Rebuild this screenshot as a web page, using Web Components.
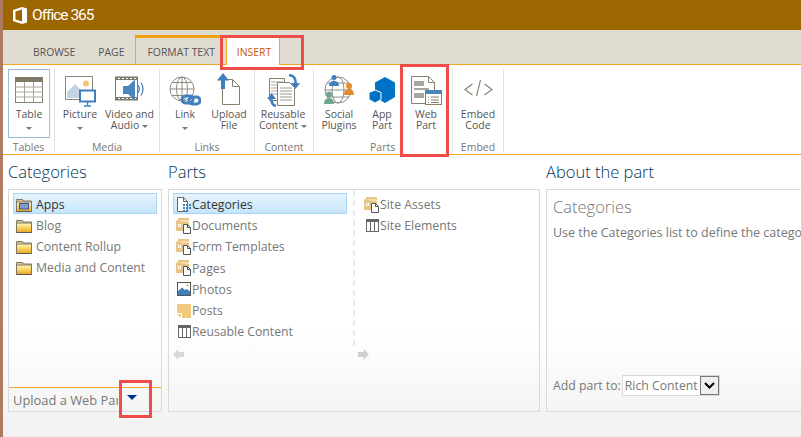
<!DOCTYPE html>
<html>
<head>
<meta charset="utf-8">
<title>Office 365</title>
<style>
  html, body { margin: 0; height: 100%; overflow: hidden; }
  body { font-family: "Open Sans", "Noto Sans", sans-serif; position: relative; background: #fff; }
</style>
</head>
<body>
<sp-page>
  <sp-suite-bar>Office 365</sp-suite-bar>
  <sp-tabs>
    <sp-tab>BROWSE</sp-tab>
    <sp-tab pad="11">PAGE</sp-tab>
    <sp-tab-group>
      <sp-tab pad="11" context>FORMAT TEXT</sp-tab>
      <sp-tab pad="10" end-pad="8" context active>INSERT</sp-tab>
    </sp-tab-group>
  </sp-tabs>
  <sp-ribbon>
    <sp-ribbon-group label="Tables" width="51">
      <sp-ribbon-button width="42" start="5" icon-top="7" pressed><sp-icon kind="table" slot="icon"></sp-icon>Table<sp-caret below></sp-caret></sp-ribbon-button>
    </sp-ribbon-group>
    <sp-ribbon-group label="Media" width="104">
      <sp-ribbon-button width="50" icon-top="7"><sp-icon kind="picture" slot="icon"></sp-icon>Picture<sp-caret below></sp-caret></sp-ribbon-button>
      <sp-ribbon-button width="49" icon-top="7"><sp-icon kind="video" slot="icon"></sp-icon>Video and<br>Audio<sp-caret></sp-caret></sp-ribbon-button>
    </sp-ribbon-group>
    <sp-ribbon-group label="Links" width="94">
      <sp-ribbon-button width="50" icon-top="7"><sp-icon kind="link" slot="icon"></sp-icon>Link<sp-caret below></sp-caret></sp-ribbon-button>
      <sp-ribbon-button width="38" icon-top="4"><sp-icon kind="upload" slot="icon"></sp-icon>Upload<br>File</sp-ribbon-button>
    </sp-ribbon-group>
    <sp-ribbon-group label="Content" width="58">
      <sp-ribbon-button width="56" icon-top="5"><sp-icon kind="reusable" slot="icon"></sp-icon>Reusable<br>Content<sp-caret></sp-caret></sp-ribbon-button>
    </sp-ribbon-group>
    <sp-ribbon-group label="Parts" width="138" label-start="56">
      <sp-ribbon-button width="50" icon-top="5"><sp-icon kind="social" slot="icon"></sp-icon>Social<br>Plugins</sp-ribbon-button>
      <sp-ribbon-button width="36" icon-top="8"><sp-icon kind="apppart" slot="icon"></sp-icon>App<br>Part</sp-ribbon-button>
      <sp-ribbon-button width="52" icon-top="7"><sp-icon kind="webpart" slot="icon"></sp-icon>Web<br>Part</sp-ribbon-button>
    </sp-ribbon-group>
    <sp-ribbon-group label="Embed" width="50">
      <sp-ribbon-button width="50" icon-top="11"><sp-icon kind="embed" slot="icon"></sp-icon>Embed<br>Code</sp-ribbon-button>
    </sp-ribbon-group>
  </sp-ribbon>
  <sp-picker>
    <sp-pane heading="Categories" width="154">
      <sp-category-list>
        <sp-item selected><sp-icon kind="folderapp" slot="icon"></sp-icon>Apps</sp-item>
        <sp-item><sp-icon kind="folder" slot="icon"></sp-icon>Blog</sp-item>
        <sp-item><sp-icon kind="folder" slot="icon"></sp-icon>Content Rollup</sp-item>
        <sp-item><sp-icon kind="folder" slot="icon"></sp-icon>Media and Content</sp-item>
      </sp-category-list>
      <sp-upload-bar>Upload a Web Part</sp-upload-bar>
    </sp-pane>
    <sp-pane heading="Parts" width="372">
      <sp-parts-columns>
        <sp-item selected tight slot="first"><sp-icon kind="catdoc" slot="icon"></sp-icon>Categories</sp-item>
        <sp-item tight slot="first"><sp-icon kind="library" slot="icon"></sp-icon>Documents</sp-item>
        <sp-item tight slot="first"><sp-icon kind="library" slot="icon"></sp-icon>Form Templates</sp-item>
        <sp-item tight slot="first"><sp-icon kind="library" slot="icon"></sp-icon>Pages</sp-item>
        <sp-item tight slot="first"><sp-icon kind="photos" slot="icon"></sp-icon>Photos</sp-item>
        <sp-item tight slot="first"><sp-icon kind="posts" slot="icon"></sp-icon>Posts</sp-item>
        <sp-item tight slot="first"><sp-icon kind="list" slot="icon"></sp-icon>Reusable Content</sp-item>
        <sp-item tight slot="second"><sp-icon kind="library" slot="icon"></sp-icon>Site Assets</sp-item>
        <sp-item tight slot="second"><sp-icon kind="list" slot="icon"></sp-icon>Site Elements</sp-item>
      </sp-parts-columns>
    </sp-pane>
    <sp-pane heading="About the part" width="300">
      <sp-about title-text="Categories">Use the Categories list to define the categories that organize your content.</sp-about>
    </sp-pane>
  </sp-picker>
</sp-page>

<!-- red marks drawn over the screenshot -->
<sp-callout style="left:220px;top:35px;width:78px;height:29px"></sp-callout>
<sp-callout style="left:400px;top:64px;width:43px;height:87px"></sp-callout>
<sp-callout style="left:119px;top:380px;width:27px;height:32px"></sp-callout>

<script>
// all icons in one place, the element below just looks them up by name
const folderGrad = `<defs><linearGradient id="fg" x1="0" y1="0" x2="0" y2="1"><stop offset="0" stop-color="#fff3b8"/><stop offset=".5" stop-color="#fbd35f"/><stop offset="1" stop-color="#e8a92c"/></linearGradient></defs>`;
const folderBody = `<path d="M.5 2.500V1.500h6l1.500 1.500h7.500v10.500H.5z" fill="#d8c48e" stroke="#7d7466"/><rect x="1" y="4.500" width="14" height="8.500" fill="url(#fg)"/><path d="M.5 4h15" stroke="#8f8672"/><path d="M.5 13.500h15" stroke="#5d5750"/>`;
const pageSmall = `<path d="M7.500 6.500h4l3 3v6h-7z" fill="#fff" stroke="#555"/><path d="M11.500 6.500v3h3" fill="none" stroke="#555"/>`;

const ICONS = {
  table: [29, 26, `<rect x=".5" y=".5" width="27" height="25" fill="#fff" stroke="#85816f"/><rect x="0" y="0" width="28" height="5" fill="#7f7b68"/><path d="M0 10h28M0 15h28M0 20h28M9.500 5v20M18.500 5v20" stroke="#a8a69b"/>`],
  picture: [31, 32, `<path d="M.5.500h27v23H.5z" fill="#fff" stroke="#8b8578"/><circle cx="21" cy="7.500" r="3" fill="#f0c674"/><path d="M2 22V16l8-8 8 8v6z" fill="#c3d3e3"/><rect x="15" y="14.500" width="15" height="11" fill="#fff" stroke="#3f7fbd" stroke-width="2"/><path d="M22.500 26v3M19 30h7" stroke="#3f7fbd" stroke-width="1.500"/>`],
  video: [29, 30, `<rect x=".5" y="1" width="22" height="23" fill="#fff" stroke="#7d7a70"/><path d="M1 1h22v3H1zM1 21h22v3H1z" fill="#7d7a70"/><path d="M3 2h2v1H3zM7 2h2v1H7zM11 2h2v1h-2zM15 2h2v1h-2zM19 2h2v1h-2zM3 22h2v1H3zM7 22h2v1H7zM11 22h2v1h-2zM15 22h2v1h-2zM19 22h2v1h-2z" fill="#fff"/><path d="M8 10h5l7-6.500v21l-7-6.500H8z" fill="#4a86bd"/><path d="M23 9q2.500 4 0 8M26 6.500q4 6.500 0 13" fill="none" stroke="#4a86bd" stroke-width="1.300"/>`],
  link: [32, 32, `<circle cx="13" cy="13" r="12" fill="#fff" stroke="#8b8b84"/><ellipse cx="13" cy="13" rx="5.500" ry="12" fill="none" stroke="#8b8b84"/><path d="M13 1v24M1 13h24M3 6.500h20M3 19.500h20" stroke="#8b8b84"/><g fill="none" stroke="#3f7fbd" stroke-width="3"><rect x="13" y="20" width="11" height="7" rx="3.500"/><rect x="20" y="21" width="11" height="7" rx="3.500"/></g>`],
  upload: [24, 32, `<path d="M5.500 6.500h10l7 7v18h-17z" fill="#fff" stroke="#85816f"/><path d="M15.500 6.500v7h7" fill="none" stroke="#85816f"/><path d="M6 0l6 7.500H8V16H4V7.500H0z" fill="#3f7fbd"/>`],
  reusable: [33, 33, `<path d="M2.500 4.500h15v22h-15z" fill="#fff" stroke="#85816f"/><path d="M4 8h12M4 11h12M4 14h12M4 17h12M4 20h12" stroke="#a8a69b"/><path d="M10.500 8.500h12l5 5v18h-17z" fill="#fff" stroke="#85816f"/><path d="M13 14h12M13 17h12M13 20h12M13 23h12M13 26h12" stroke="#9a9a92"/><path d="M22 1q7 1 6.500 8" fill="none" stroke="#3f7fbd" stroke-width="2.500"/><path d="M24 9h9l-4.500 6z" fill="#3f7fbd"/><path d="M9 32q-5-1-4.500-8" fill="none" stroke="#3f7fbd" stroke-width="2.500"/><path d="M0 25l4.500-6 4.500 6z" fill="#3f7fbd"/>`],
  social: [32, 32, `<circle cx="15" cy="16" r="13" fill="none" stroke="#8f8f88"/><ellipse cx="15" cy="16" rx="6" ry="13" fill="none" stroke="#8f8f88"/><path d="M2 16h26M4 9h22M4 23h22" stroke="#8f8f88"/><circle cx="11" cy="3.500" r="2.500" fill="#3f7fbd"/><path d="M6 12q0-5 5-5t5 5z" fill="#3f7fbd"/><circle cx="26" cy="12" r="3" fill="#e58b2e"/><path d="M21 21q0-6 5-6t5 6z" fill="#e58b2e"/><circle cx="6" cy="20.500" r="3" fill="#6fa68f"/><path d="M1 30q0-6 5-6t5 6z" fill="#6fa68f"/>`],
  apppart: [27, 27, `<path d="M16 0l10 5.500V20l-10 6-10-6V5.500z" fill="#0072c6"/><path d="M6 13l6 2.500v7L6 26 0 22.500v-7z" fill="#0072c6" stroke="#fff"/>`],
  webpart: [31, 29, `<path d="M.5.500h17l6 6v21H.5z" fill="#fff" stroke="#85816f"/><path d="M17.500.5v6h6" fill="none" stroke="#85816f"/><path d="M3 5h10v5H3zM3 12h15v2H3zM3 17h10v5H3z" fill="#a6a6a0"/><rect x="14.500" y="14.500" width="16" height="14" fill="#fff" stroke="#85816f"/><rect x="14" y="14" width="17" height="4" fill="#4a86bd"/><path d="M17 21h1M20 21h8M17 24h1M20 24h8M17 26.500h1M20 26.500h8" stroke="#85816f"/>`],
  embed: [29, 16, `<path d="M8.500 4L1 9.500 8.500 15M20.500 4L28 9.500 20.500 15" fill="none" stroke="#8a867a" stroke-width="1.300"/><path d="M16.500 0l-4 16" fill="none" stroke="#8a867a" stroke-width="1.200"/>`],
  folder: [16, 14, folderGrad + folderBody],
  folderapp: [16, 14, folderGrad + folderBody + `<rect x="3.500" y="5.500" width="9" height="5.500" fill="#7d9ccb" stroke="#3e5a92"/>`],
  library: [16, 16, `<path d="M2 3V0h11v3z" fill="#e8c587"/><path d="M1 5V2h11v3z" fill="#f4dcae"/><path d="M0 2.500h5L6 4h7v9H0z" fill="#e8c587"/><path d="M2 6h3v3H2z" fill="#fff"/><path d="M3 7h1v1H3z" fill="#c49a56"/>` + pageSmall],
  catdoc: [15, 15, `<path d="M.5.500h6l4 4v10h-10z" fill="#fff" stroke="#666"/><path d="M6.500.5v4h4" fill="none" stroke="#666"/><path d="M6 7h2v2H6zM9 7h2v2H9zM12 7h2v2h-2zM6 10h2v2H6zM9 10h2v2H9zM12 10h2v2h-2zM6 13h2v2H6zM9 13h2v2H9z" fill="#3f7fbd"/>`],
  photos: [14, 14, `<rect x=".5" y=".5" width="13" height="13" fill="#fff" stroke="#555"/><path d="M1 13V9l4-3.500 3 2.500 2-1 3 2.500V13z" fill="#3f7fbd"/><path d="M9.500 2.500h2v2h-2z" fill="#e9b562"/>`],
  posts: [14, 14, `<path d="M0 0h14v14H5V9H0z" fill="#f0c97f"/><path d="M0 10h4v4z" fill="#f0c97f"/>`],
  list: [13, 13, `<rect x=".5" y=".5" width="12" height="12" fill="#fff" stroke="#666"/><rect x="0" y="0" width="13" height="3" fill="#666"/><path d="M4.500 3v10M8.500 3v10" stroke="#666"/>`]
};

class SpIcon extends HTMLElement {
  connectedCallback() {
    const [w, h, body] = ICONS[this.getAttribute('kind')];
    this.attachShadow({ mode: 'open' }).innerHTML = `
      <style>:host { display: block; width: ${w}px; height: ${h}px; line-height: 0; }</style>
      <svg width="${w}" height="${h}" viewBox="0 0 ${w} ${h}">${body}</svg>`;
  }
}

class SpPage extends HTMLElement {
  constructor() {
    super();
    this.attachShadow({ mode: 'open' }).innerHTML = `
      <style>
        :host { display: flex; flex-direction: column; height: 437px; width: 801px; box-sizing: border-box; border-left: 3px solid #ae7a60; overflow: hidden;
          background: linear-gradient(#fff 0, #fff 330px, #f1f1f1 437px); }
      </style>
      <slot></slot>`;
  }
}

class SpSuiteBar extends HTMLElement {
  constructor() {
    super();
    this.attachShadow({ mode: 'open' }).innerHTML = `
      <style>
        :host { display: flex; align-items: center; gap: 5px; height: 30px; padding-left: 10px; flex: none; background: #9c6600; color: #fff;
          font-family: Roboto, "Open Sans", sans-serif; font-size: 15.5px; letter-spacing: -1px; }
        svg { display: block; }
      </style>
      <svg width="14" height="17" viewBox="0 0 14 17"><path d="M0 3L9 0l5 1.500v14L9 17l-9-3zM2.500 4.500v8L9 14.500V2.500z" fill="#fff"/></svg>
      <slot></slot>`;
  }
}

class SpTabs extends HTMLElement {
  constructor() {
    super();
    this.attachShadow({ mode: 'open' }).innerHTML = `
      <style>
        :host { display: flex; align-items: flex-end; height: 34px; padding-left: 18px; flex: none; background: #e1dcd2; border-bottom: 1px solid #f5a623; }
      </style>
      <slot></slot>`;
  }
}

class SpTabGroup extends HTMLElement {
  constructor() {
    super();
    this.attachShadow({ mode: 'open' }).innerHTML = `
      <style>
        :host { display: flex; border-top: 3px solid #f5a00f; margin-bottom: -1px; height: 27px; box-sizing: content-box; }
      </style>
      <slot></slot>`;
  }
}

class SpTab extends HTMLElement {
  constructor() {
    super();
    const pad = this.getAttribute('pad') || 12;
    const endPad = this.getAttribute('end-pad') || pad;
    this.attachShadow({ mode: 'open' }).innerHTML = `
      <style>
        :host { display: flex; align-items: center; height: 26px; box-sizing: border-box; padding: 1px ${endPad}px 0 ${pad}px; font-size: 10.4px; color: #555; }
        :host([context]) { height: 27px; padding-bottom: 0; border-left: 1px solid #f5a623; }
        :host([active]) { background: #fff; color: #c9570d; border-right: 1px solid #f5a623; }
      </style>
      <slot></slot>`;
  }
}

class SpRibbon extends HTMLElement {
  constructor() {
    super();
    this.attachShadow({ mode: 'open' }).innerHTML = `
      <style>
        :host { display: flex; height: 90px; box-sizing: border-box; flex: none; padding: 4px 0 2px; background: #fff; border-bottom: 1px solid #f5a623; }
      </style>
      <slot></slot>`;
  }
}

class SpRibbonGroup extends HTMLElement {
  constructor() {
    super();
    const width = this.getAttribute('width');
    const labelStart = this.getAttribute('label-start');
    this.attachShadow({ mode: 'open' }).innerHTML = `
      <style>
        :host { display: flex; flex-direction: column; width: ${width}px; border-right: 1px solid #e1e1e1; flex: none; box-sizing: content-box; }
        .buttons { display: flex; height: 69px; }
        .label { height: 14px; padding-top: 2px; font-size: 10.5px; color: #777; text-align: center; ${labelStart ? 'margin-left: ' + labelStart + 'px; width: 30px; text-align: left;' : ''} }
      </style>
      <div class="buttons"><slot></slot></div>
      <div class="label">${this.getAttribute('label')}</div>`;
  }
}

class SpRibbonButton extends HTMLElement {
  constructor() {
    super();
    const width = this.getAttribute('width');
    const start = this.getAttribute('start') || 0;
    const top = this.getAttribute('icon-top') || 0;
    this.attachShadow({ mode: 'open' }).innerHTML = `
      <style>
        :host { display: block; width: ${width}px; margin-left: ${start}px; height: 69px; box-sizing: border-box; flex: none; color: #555; font-size: 10.5px; line-height: 11px; text-align: center; white-space: nowrap; }
        :host([pressed]) { border: 1px solid #9dbdd4; }
        .icon { display: flex; justify-content: center; box-sizing: border-box; height: 40px; padding-top: ${top}px; overflow: hidden; }
        :host([pressed]) .icon { height: 39px; }
      </style>
      <div class="icon"><slot name="icon"></slot></div>
      <slot></slot>`;
  }
}

class SpCaret extends HTMLElement {
  constructor() {
    super();
    this.attachShadow({ mode: 'open' }).innerHTML = `
      <style>
        :host { display: inline-block; width: 0; height: 0; margin-left: 3px; vertical-align: middle; border: 3.500px solid transparent; border-bottom: 0; border-top: 3.500px solid #787878; }
        :host([below]) { display: block; margin: 7px auto 0; }
      </style>`;
  }
}

class SpPicker extends HTMLElement {
  constructor() {
    super();
    this.attachShadow({ mode: 'open' }).innerHTML = `
      <style>
        :host { display: flex; gap: 6px; padding-left: 5px; flex: 1; min-height: 0; }
      </style>
      <slot></slot>`;
  }
}

class SpPane extends HTMLElement {
  constructor() {
    super();
    const width = this.getAttribute('width');
    this.attachShadow({ mode: 'open' }).innerHTML = `
      <style>
        :host { display: flex; flex-direction: column; width: ${width}px; flex: none; height: 257px; }
        h2 { margin: 0; height: 34px; box-sizing: border-box; padding-top: 5px; font-size: 16.5px; line-height: 24px; font-weight: 300; color: #003759; white-space: nowrap; }
        .box { flex: 1; min-height: 0; display: flex; flex-direction: column; box-sizing: border-box; border: 1px solid #d9d9d9; }
      </style>
      <h2>${this.getAttribute('heading')}</h2>
      <div class="box"><slot></slot></div>`;
  }
}

class SpCategoryList extends HTMLElement {
  constructor() {
    super();
    this.attachShadow({ mode: 'open' }).innerHTML = `
      <style>
        :host { display: flex; flex-direction: column; flex: 1; padding: 3px 4px 0; min-height: 0; }
      </style>
      <slot></slot>`;
  }
}

class SpItem extends HTMLElement {
  constructor() {
    super();
    this.attachShadow({ mode: 'open' }).innerHTML = `
      <style>
        :host { display: flex; align-items: center; gap: 4px; height: 21px; flex: none; box-sizing: border-box; padding: 2px 0 0 2px; font-size: 12.25px; color: #777; white-space: nowrap; border: 1px solid transparent; }
        :host([tight]) { gap: 0; height: 21.2px; }
        :host([selected]) { color: #333; border-color: #a9d6f5; background: linear-gradient(#e6f4fd, #c6e5fb); }
        .icon { display: flex; align-items: center; width: 16px; justify-content: center; }
      </style>
      <div class="icon"><slot name="icon"></slot></div>
      <slot></slot>`;
  }
}

class SpUploadBar extends HTMLElement {
  constructor() {
    super();
    this.attachShadow({ mode: 'open' }).innerHTML = `
      <style>
        :host { display: flex; align-items: center; height: 24px; flex: none; box-sizing: border-box; padding-left: 4px; border-top: 1px solid #f5a623; font-size: 12.9px; color: #777; white-space: nowrap; }
        .text { width: 105px; overflow: hidden; }
        .arrow { margin-left: 9px; margin-bottom: 5px; width: 0; height: 0; border: 5px solid transparent; border-bottom: 0; border-top: 5px solid #00308f; }
      </style>
      <div class="text"><slot></slot></div>
      <div class="arrow"></div>`;
  }
}

class SpPartsColumns extends HTMLElement {
  constructor() {
    super();
    this.attachShadow({ mode: 'open' }).innerHTML = `
      <style>
        :host { display: grid; grid-template-columns: 178px 7px 1fr; grid-template-rows: 156px 1fr; flex: 1; min-height: 0; padding-left: 4px; }
        .col { display: flex; flex-direction: column; padding-top: 3px; }
        .first { width: 174px; }
        .second { padding-left: 2px; margin-left: 1px; }
        .rule { border-right: 2px dashed #e8e8fa; width: 0; margin-left: 2px; }
        .nav { display: flex; align-items: flex-start; padding-top: 3px; }
        .nav.right { grid-column: 3; }
        svg { display: block; }
      </style>
      <div class="col first"><slot name="first"></slot></div>
      <div class="rule"></div>
      <div class="col second"><slot name="second"></slot></div>
      <div class="nav"><svg width="11" height="11" viewBox="0 0 11 11"><path d="M0 5.500L5.500 0v3H11v5H5.500v3z" fill="#d8d8d8"/></svg></div>
      <div class="nav right"><svg width="11" height="11" viewBox="0 0 11 11"><path d="M11 5.500L5.500 0v3H0v5h5.500v3z" fill="#d0d0d0"/></svg></div>`;
  }
}

class SpAbout extends HTMLElement {
  constructor() {
    super();
    this.attachShadow({ mode: 'open' }).innerHTML = `
      <style>
        :host { display: flex; flex-direction: column; flex: 1; min-height: 0; padding: 5px 0 15px 6px; color: #777; }
        h3 { margin: 0 0 5px; font-size: 16.5px; line-height: 24px; font-weight: 300; color: #777; }
        .text { font-size: 12.5px; line-height: 18px; white-space: nowrap; flex: 1; }
        .add { display: flex; align-items: center; font-size: 12.25px; white-space: nowrap; }
        .select { display: flex; align-items: center; justify-content: space-between; width: 98px; height: 21px; box-sizing: border-box; margin-left: 1px; padding-left: 2px; border: 1px solid #d9d9d9; background: #fff; }
        .drop { display: flex; align-items: center; justify-content: center; width: 19px; height: 19px; box-sizing: border-box; background: #efefef; border: 1px solid #777; }
      </style>
      <h3>${this.getAttribute('title-text')}</h3>
      <div class="text"><slot></slot></div>
      <div class="add">Add part to:
        <div class="select">Rich Content
          <div class="drop"><svg width="11" height="7" viewBox="0 0 11 7"><path d="M1 1l4.500 4.500L10 1" fill="none" stroke="#000" stroke-width="2"/></svg></div>
        </div>
      </div>`;
  }
}

class SpCallout extends HTMLElement {
  constructor() {
    super();
    this.attachShadow({ mode: 'open' }).innerHTML = `
      <style>
        :host { display: block; position: absolute; border: 3px solid #ee4d4a; }
      </style>`;
  }
}

customElements.define('sp-icon', SpIcon);
customElements.define('sp-page', SpPage);
customElements.define('sp-suite-bar', SpSuiteBar);
customElements.define('sp-tabs', SpTabs);
customElements.define('sp-tab-group', SpTabGroup);
customElements.define('sp-tab', SpTab);
customElements.define('sp-ribbon', SpRibbon);
customElements.define('sp-ribbon-group', SpRibbonGroup);
customElements.define('sp-ribbon-button', SpRibbonButton);
customElements.define('sp-caret', SpCaret);
customElements.define('sp-picker', SpPicker);
customElements.define('sp-pane', SpPane);
customElements.define('sp-category-list', SpCategoryList);
customElements.define('sp-item', SpItem);
customElements.define('sp-upload-bar', SpUploadBar);
customElements.define('sp-parts-columns', SpPartsColumns);
customElements.define('sp-about', SpAbout);
customElements.define('sp-callout', SpCallout);
</script>
</body>
</html>
